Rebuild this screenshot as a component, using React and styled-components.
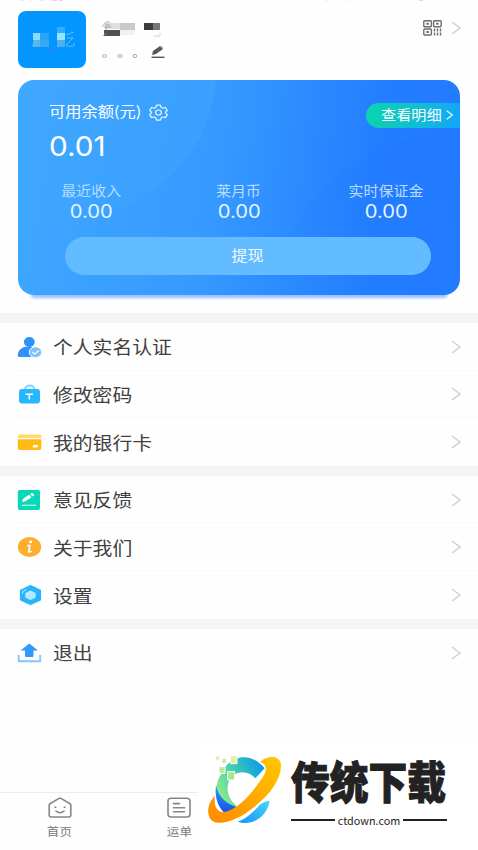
import React from 'react';
import styled, { createGlobalStyle } from 'styled-components';

const GlobalStyle = createGlobalStyle`
  * {
    box-sizing: border-box;
  }
  body {
    margin: 0;
    background: #fff;
    font-family: "Noto Sans CJK SC", "Noto Sans", sans-serif;
  }
  button {
    font-family: inherit;
  }
`;

/**
 * Full height column that holds the page
 */
const Page = styled.div`
  display: flex;
  flex-direction: column;
  width: 478px;
  height: 850px;
  overflow: hidden;
  background: #fefefe;
`;

/**
 * Single line of text, widened from its left edge or centre
 */
const Label = styled.span`
  display: inline-block;
  white-space: nowrap;
  line-height: 1;
  font-size: ${props => props.$size}px;
  font-weight: ${props => props.$weight || 400};
  color: ${props => props.$color || '#fff'};
  transform: scaleX(${props => props.$stretch || 1.1});
  transform-origin: ${props => props.$origin || 'left'} center;
`;

/**
 * Amount of money
 */
const Amount = styled(Label)`
  font-family: Inter, "Liberation Sans", sans-serif;
`;

/**
 * Remains of the status bar
 */
const StatusStrip = styled.svg`
  display: block;
  flex: none;
`;

const Profile = styled.header`
  display: flex;
  flex: none;
  height: 77px;
  padding: 8px 17px 0 17.5px;
`;

const Avatar = styled.div`
  width: 68.5px;
  height: 57px;
  border-radius: 8px;
  overflow: hidden;
  background: #0396ff;
`;

const UserInfo = styled.div`
  flex: 1;
  padding: 7px 0 0 15px;
`;

const ProfileLinks = styled.div`
  display: flex;
  gap: 9px;
  height: 34px;
  align-items: center;
`;

/**
 * Blue balance card
 */
const Card = styled.section`
  position: relative;
  flex: none;
  width: 442.5px;
  height: 215px;
  margin: 0 0 18px 17.5px;
  border-radius: 16px;
  background: linear-gradient(97deg, #40a8ff 0%, #3599ff 45%, #237dff 80%, #237bff 100%);
  box-shadow: 0 16px 3px -13px rgba(50, 135, 255, 0.5);
`;

const CardShapes = styled.svg`
  position: absolute;
  inset: 0;
  border-radius: 16px;
`;

const CardContent = styled.div`
  position: relative;
  display: flex;
  flex-direction: column;
`;

const CardHead = styled.div`
  display: flex;
  justify-content: space-between;
  height: 49px;
  padding: 22.5px 0 0 31.5px;
`;

const BalanceTitle = styled.div`
  display: flex;
  height: 18px;
  align-items: center;
`;

const Gear = styled.svg`
  margin: 2px 0 0 18px;
`;

const DetailButton = styled.button`
  display: flex;
  align-items: center;
  width: 94.5px;
  height: 25.5px;
  padding: 0 7px 1px 15px;
  border: none;
  border-radius: 13px 0 0 13px;
  background: linear-gradient(100deg, #0bd4ae 0%, #0fc0cf 50%, #12a6fa 100%);
  justify-content: space-between;
`;

const Balance = styled.div`
  height: 55px;
  padding: 3px 0 0 31px;
  line-height: 34px;
`;

const Stats = styled.div`
  display: grid;
  grid-template-columns: repeat(3, 1fr);
  height: 52.5px;
`;

const Stat = styled.div`
  display: flex;
  flex-direction: column;
  align-items: center;
  gap: 5px;
`;

const WithdrawButton = styled.button`
  width: 366.5px;
  height: 38px;
  margin-left: 47px;
  padding-bottom: 1px;
  border: none;
  border-radius: 19px;
  background: #62bcff;
`;

/**
 * Menu of rows, groups are split by a grey band
 */
const MenuGroup = styled.ul`
  flex: none;
  margin: 0;
  padding: 0 0 0 17px;
  list-style: none;
  border-top: 10px solid #f4f4f4;
`;

const MenuRow = styled.li`
  display: flex;
  align-items: center;
  height: 47.6px;
  padding: 1px 17px 0 0;
  border-bottom: 1px solid #f8f8f8;
  &:last-child {
    border-bottom: none;
  }
`;

const MenuText = styled.div`
  flex: 1;
  padding: 0 0 1px 10px;
  line-height: 1;
`;

/**
 * Bottom area, tabs on the left and the site mark on the right
 */
const Footer = styled.footer`
  display: flex;
  align-items: flex-end;
  margin-top: auto;
  flex: none;
`;

const Tabs = styled.nav`
  display: flex;
  width: 198px;
  height: 58px;
  overflow: hidden;
  border-top: 1px solid #ececec;
`;

const Tab = styled.div`
  display: flex;
  flex: 0 0 119.5px;
  flex-direction: column;
  align-items: center;
  gap: 7px;
  padding-top: 4px;
`;

const SiteMark = styled.div`
  display: flex;
  width: 280px;
  height: 105px;
  background: #fff;
`;

const SiteTitle = styled.div`
  display: flex;
  flex-direction: column;
  width: 156px;
  margin-left: -29px;
  padding-top: 13px;
`;

const SiteName = styled(Label)`
  -webkit-text-stroke: 1px #222;
`;

const SiteAddress = styled.div`
  display: flex;
  align-items: center;
  gap: 3px;
  margin-top: 12px;
  font: 400 10.8px/12px "Noto Sans CJK SC", sans-serif;
  color: #222;
  &::before,
  &::after {
    content: '';
    flex: 1;
    height: 2px;
    background: #222;
  }
`;

const Arrow = ({ color = '#cfcfcf', width = 10, height = 14, stroke = 1.4 }) => (
  <svg width={width} height={height} viewBox="0 0 10 14" fill="none" stroke={color} strokeWidth={stroke}>
    <path d="M1 1l8 6-8 6" />
  </svg>
);

const AvatarMosaic = () => (
  <svg width="69" height="57" viewBox="0 0 69 57">
    <path d="M15 22h7v7h-7z" fill="#87dcff" />
    <path d="M22 22h9v7h-9z" fill="#28a5fa" />
    <path d="M15 29h7v7h-7z" fill="#55b6f6" />
    <path d="M22 29h9v7h-9z" fill="#38a9f2" />
    <path d="M39 16h8v6h-8z" fill="#35acff" />
    <path d="M39 22h8v7h-8z" fill="#96e5ff" />
    <path d="M39 29h8v7h-8z" fill="#4db1ef" />
    <path d="M31 36h8v6h-8z" fill="#168cff" />
    <path d="M48 24l8-3M49 27h6l-7 7q0 2 8 1v-3M14 35l5-5" fill="none" stroke="#65bdf4" strokeWidth="1" />
  </svg>
);

const NameMosaic = () => (
  <svg width="80" height="40" viewBox="0 0 80 40">
    <path d="M4 5h16v6H4z" fill="#dedede" />
    <path d="M19 5h15v7H19z" fill="#c9c9c9" />
    <path d="M3 12h16v6H3z" fill="#515151" />
    <path d="M19 12h15v5H19z" fill="#f1f1f1" />
    <path d="M43 5h9v7h-9z" fill="#3c3c3c" />
    <path d="M52 5h7v7h-7z" fill="#777" />
    <path d="M1 9l4-5h4M4 7h5M3 9h7M5 9v3M2 18l3-3" fill="none" stroke="#999" strokeWidth=".8" />
    <path d="M53 18h6v-3" fill="none" stroke="#ccc" strokeWidth=".8" />
    <g fill="none" stroke="#a8a8a8" strokeWidth="1">
      <ellipse cx="3.500" cy="38" rx="1.900" ry="1.500" />
      <ellipse cx="19" cy="38" rx="1.900" ry="1.500" />
      <ellipse cx="34" cy="38" rx="1.900" ry="1.500" />
    </g>
    <path d="M51 37l1-4 7-5 3 3-7 5z" fill="#585858" />
    <path d="M60 28l2 2" stroke="#aaa" />
    <path d="M50.500 39.300h13" stroke="#555" strokeWidth="1.400" />
  </svg>
);

const QrIcon = () => (
  <svg width="19" height="16" viewBox="0 0 19 16" fill="none" stroke="#6c6c6c" strokeWidth="1.400">
    <rect x=".8" y=".8" width="7.600" height="6" rx="1" />
    <rect x="10.600" y=".8" width="7.600" height="6" rx="1" />
    <rect x=".8" y="9" width="7.600" height="6" rx="1" />
    <path d="M3.400 3.800h2.400M13.200 3.800h2.400M3.400 12h2.400" strokeWidth="2" />
    <path d="M11.500 8.500v7M14.500 8.500v7M17.500 8.500v7" strokeDasharray="3 1" />
  </svg>
);

const UserIcon = () => (
  <svg width="26" height="24" viewBox="0 0 26 24">
    <ellipse cx="12.300" cy="7" rx="5.400" ry="5" fill="#2f92fb" />
    <path d="M.8 20.500C.8 15 5 11.600 12 11.600c4 0 7 1.400 8.500 3.400L16 22H2.500Q.8 22 .8 20.500z" fill="#2f92fb" />
    <ellipse cx="18.500" cy="17.200" rx="6.200" ry="5.500" fill="#7fc0fc" stroke="#fff" />
    <path d="M15.300 17l2.500 2.200 4-3.700" fill="none" stroke="#fff" strokeWidth="1.300" />
  </svg>
);

const LockIcon = () => (
  <svg width="26" height="24" viewBox="0 0 26 24">
    <path d="M8 8c0-6 9.500-6 9.500 0" fill="none" stroke="#7ad6ff" strokeWidth="2" />
    <rect x="2" y="7" width="21" height="14.500" rx="3" fill="#27b7fd" />
    <path d="M8.500 12.200h7.500M12.300 12v5.500" stroke="#fff" strokeWidth="1.500" />
  </svg>
);

const CardIcon = () => (
  <svg width="26" height="24" viewBox="0 0 26 24">
    <path d="M.8 8V6q0-1.500 1.500-1.500H23q1.300 0 1.300 1.500v2z" fill="#ffd970" />
    <path d="M.8 9.300h23.500V18q0 2-2 2H2.800q-2 0-2-2z" fill="#ffba13" />
    <path d="M16.500 15h4.800l-1 2.600h-4.800z" fill="#fff" />
  </svg>
);

const FeedbackIcon = () => (
  <svg width="26" height="24" viewBox="0 0 26 24">
    <rect x=".8" y="2" width="22.200" height="20" rx="2" fill="#05d9b7" />
    <path d="M5 14l1-3.200 6-4 2.500 2.500-6 4zM13 6l2-1.200L17.500 7l-2 1.400z" fill="#fff" />
    <path d="M5 17.300h14" stroke="#fff" strokeWidth="1.200" opacity=".8" />
  </svg>
);

const InfoIcon = () => (
  <svg width="26" height="24" viewBox="0 0 26 24">
    <ellipse cx="12.500" cy="12" rx="11.700" ry="10" fill="#ffad31" />
    <ellipse cx="13.700" cy="6.900" rx="1.500" ry="1.300" fill="#fff" />
    <path d="M10.300 10.600h2.600l-1.300 6.200q1.400.5 2.700-.9" fill="none" stroke="#fff" strokeWidth="1.700" />
  </svg>
);

const SettingsIcon = () => (
  <svg width="26" height="24" viewBox="0 0 26 24">
    <path d="M13.500 2.800l9.800 4.700v9.200l-9.800 4.700-9.800-4.700V7.500z" fill="#26b5fd" stroke="#26b5fd" strokeWidth="1.500" strokeLinejoin="round" />
    <path d="M13.500 8l4.700 2.200v4.200l-4.700 2.200-4.700-2.200v-4.200z" fill="#b6e8ff" stroke="#b6e8ff" strokeLinejoin="round" />
    <path d="M5.500 11V8.500l4-2" fill="none" stroke="#b6e8ff" />
  </svg>
);

const ExitIcon = () => (
  <svg width="26" height="24" viewBox="0 0 26 24">
    <path d="M1.800 14v6.300h21.400V14" fill="none" stroke="#86c3ff" strokeWidth="1.900" strokeLinejoin="round" />
    <path d="M12.300 2.500l8.700 7h-4.500V15q0 1-1 1H9q-1 0-1-1V9.500H3.700z" fill="#3198fc" />
  </svg>
);

const HomeIcon = () => (
  <svg width="24" height="22" viewBox="0 0 24 22" fill="none" stroke="#858585" strokeWidth="1.600" strokeLinecap="round">
    <path d="M1.200 8q0-.8.8-1.300L11.100 1.400q.9-.5 1.800 0L22 6.700q.8.500.8 1.300v10.500q0 1.500-1.700 1.500H2.900q-1.700 0-1.700-1.500z" />
    <path d="M7 10.200h.8M16.200 10.200h.8M8 14.200q4 3 8 0" />
  </svg>
);

const OrderIcon = () => (
  <svg width="24" height="22" viewBox="0 0 24 22" fill="none" stroke="#858585" strokeWidth="1.600" strokeLinecap="round">
    <rect x="1" y="1.300" width="22" height="18.700" rx="3" />
    <path d="M6.500 6.600h6M6.500 10.700h11M6.500 14.800h11" />
  </svg>
);

const Logo = styled.svg`
  flex: none;
  margin-left: 2px;
`;

const SiteLogo = () => (
  <Logo width="120" height="90" viewBox="0 0 360 270">
    <defs>
      <linearGradient id="arcTop" gradientUnits="userSpaceOnUse" x1="50" y1="130" x2="195" y2="65">
        <stop offset="0" stopColor="#8beb8c" />
        <stop offset=".5" stopColor="#39c6b5" />
        <stop offset="1" stopColor="#0698f2" />
      </linearGradient>
      <linearGradient id="arcLow" x1="0" y1="0" x2="0" y2="1">
        <stop offset="0" stopColor="#26a2f2" />
        <stop offset="1" stopColor="#1b4fe8" />
      </linearGradient>
      <linearGradient id="arcEnd" x1="0" y1="1" x2="1" y2="0">
        <stop offset="0" stopColor="#1593f4" />
        <stop offset="1" stopColor="#48d7ff" />
      </linearGradient>
      <linearGradient id="orbit" x1="0" y1="1" x2="1" y2="0">
        <stop offset="0" stopColor="#ff8a00" />
        <stop offset="1" stopColor="#ffc800" />
      </linearGradient>
    </defs>
    <path d="M67 82C83 38 146 12 194 70L166 100C144 74 102 75 87 108C75 139 89 168 116 188L70 200C38 164 45 112 67 82z" fill="url(#arcTop)" />
    <path d="M48 121C55 153 75 175 108 186L100 200L72 203C49 179 44 148 48 121z" fill="url(#arcLow)" />
    <path d="M113 230C140 222 165 195 179 179Q192 169 209 167C203 211 159 246 113 230z" fill="url(#arcEnd)" />
    <path d="M180 51C201 31 235 31 242 53C249 91 217 143 167 182C117 226 40 255 27 213C20 194 28 169 45 152C42 173 44 199 69 202C112 196 152 149 180 109C199 84 208 60 180 51z" fill="url(#orbit)" />
    <g stroke="#fff" strokeWidth="3">
      <path d="M83 80h21v25H83z" fill="#a5e68c" />
      <path d="M57 65h18v20H57z" fill="#b8e995" />
      <path d="M91 32h20v24H91z" fill="#e8efa1" />
      <path d="M66 40h13v15H66z" fill="#b9eaa9" />
      <path d="M47 32h12v14H47z" fill="#e8efa1" />
    </g>
  </Logo>
);

const stats = [
  { name: '最近收入', value: '0.00' },
  { name: '莱月币', value: '0.00' },
  { name: '实时保证金', value: '0.00' },
];

const menu = [
  [
    { text: '个人实名认证', icon: UserIcon },
    { text: '修改密码', icon: LockIcon },
    { text: '我的银行卡', icon: CardIcon },
  ],
  [
    { text: '意见反馈', icon: FeedbackIcon },
    { text: '关于我们', icon: InfoIcon },
    { text: '设置', icon: SettingsIcon },
  ],
  [{ text: '退出', icon: ExitIcon }],
];

const BalanceCard = () => (
  <Card>
    <CardShapes width="442.5" height="215" viewBox="0 0 443 215">
      <defs>
        <linearGradient id="glow">
          <stop offset="0" stopColor="#46aeff" stopOpacity="0" />
          <stop offset="1" stopColor="#46aeff" stopOpacity=".3" />
        </linearGradient>
        <linearGradient id="shade" x1="0" y1="0" x2="0" y2="1">
          <stop offset="0" stopColor="#1c70ff" stopOpacity=".2" />
          <stop offset=".8" stopColor="#1c70ff" stopOpacity="0" />
        </linearGradient>
      </defs>
      <path d="M0 0H198C194 55 162 100 110 125C70 143 30 147 0 144z" fill="url(#glow)" />
      <path d="M275 150C305 92 365 59 443 46V215H265Q255 185 275 150z" fill="url(#shade)" />
    </CardShapes>
    <CardContent>
      <CardHead>
        <BalanceTitle>
          <Label $size={14.5} $stretch={1.12}>可用余额(元)</Label>
          <Gear width="19" height="17" viewBox="0 0 24 24" preserveAspectRatio="none" fill="none" stroke="#e5f4ff" strokeWidth="1.600" strokeLinejoin="round">
            <path d="M9.500 1.500h5l.8 3.200 2.200 1.200 3.200-.9 2.400 4.200-2.300 2.400v1l2.300 2.400-2.400 4.200-3.200-.9-2.200 1.200-.8 3.200h-5l-.8-3.200-2.200-1.200-3.200.9L.9 15l2.300-2.400v-1L.9 9.200 3.300 5l3.200.9 2.200-1.200z" />
            <circle cx="12" cy="12" r="3.600" />
          </Gear>
        </BalanceTitle>
        <DetailButton>
          <Label $size={13.8}>查看明细</Label>
          <Arrow color="#d9f6ff" width={7} height={10} stroke={2} />
        </DetailButton>
      </CardHead>
      <Balance>
        <Amount $size={27} $stretch={1.1}>0.01</Amount>
      </Balance>
      <Stats>
        {stats.map(stat => (
          <Stat key={stat.name}>
            <Label $size={13.6} $origin="center" $color="#b9dcff">{stat.name}</Label>
            <Amount $size={18} $origin="center" $stretch={1.12} $color="#e7f4ff">{stat.value}</Amount>
          </Stat>
        ))}
      </Stats>
      <WithdrawButton>
        <Label $size={14.6} $origin="center" $color="#f2faff">提现</Label>
      </WithdrawButton>
    </CardContent>
  </Card>
);

const App = () => (
  <>
    <GlobalStyle />
    <Page>
      <StatusStrip width="478" height="3" viewBox="0 0 478 3">
        <path d="M20 0h4M30 0h3M40 0h5M326 0h2M346 0h2" stroke="#ddd" />
        <path d="M52 0h5M59 0h4M419 0h4" stroke="#ff9a9a" />
      </StatusStrip>
      <Profile>
        <Avatar>
          <AvatarMosaic />
        </Avatar>
        <UserInfo>
          <NameMosaic />
        </UserInfo>
        <ProfileLinks>
          <QrIcon />
          <Arrow />
        </ProfileLinks>
      </Profile>
      <BalanceCard />
      {menu.map((group, index) => (
        <MenuGroup key={index}>
          {group.map(({ text, icon: Icon }) => (
            <MenuRow key={text}>
              <Icon />
              <MenuText>
                <Label $size={18} $color="#404040">{text}</Label>
              </MenuText>
              <Arrow />
            </MenuRow>
          ))}
        </MenuGroup>
      ))}
      <Footer>
        <Tabs>
          <Tab>
            <HomeIcon />
            <Label $size={11.4} $origin="center" $color="#7a7a7a">首页</Label>
          </Tab>
          <Tab>
            <OrderIcon />
            <Label $size={11.4} $origin="center" $color="#7a7a7a">运单</Label>
          </Tab>
        </Tabs>
        <SiteMark>
          <SiteLogo />
          <SiteTitle>
            <SiteName $size={44} $weight={900} $color="#222" $stretch={0.88}>传统下载</SiteName>
            <SiteAddress>ctdown.com</SiteAddress>
          </SiteTitle>
        </SiteMark>
      </Footer>
    </Page>
  </>
);

export default App;
